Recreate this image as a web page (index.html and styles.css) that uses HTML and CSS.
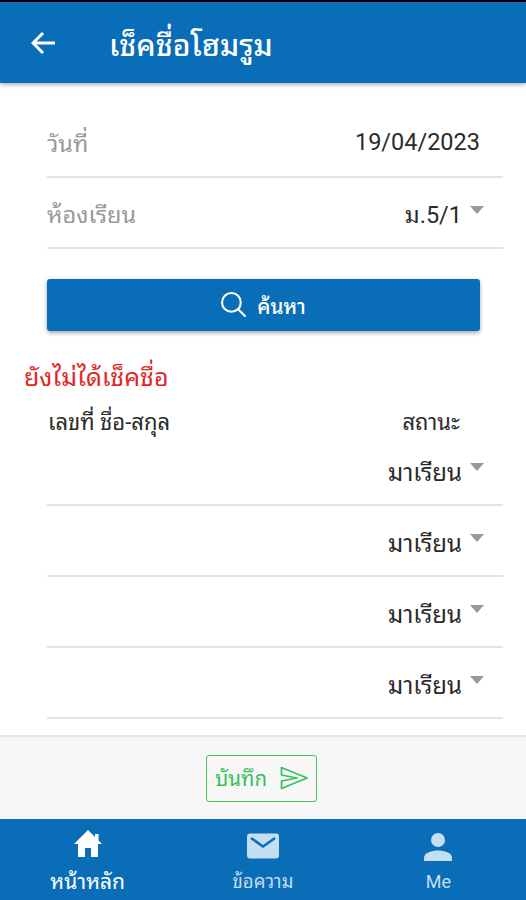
FILE: index.html
```html
<!DOCTYPE html>
<html lang="th">
<head>
  <meta charset="UTF-8">
  <title>เช็คชื่อโฮมรูม</title>
  <link rel="stylesheet" href="styles.css">
</head>
<body>
  <header class="toolbar">
    <svg class="back" viewBox="0 0 24 22" fill="none" stroke="currentColor" stroke-width="3">
      <path d="M12 1 2 11l10 10M2 11h22"/>
    </svg>
    <h1>เช็คชื่อโฮมรูม</h1>
  </header>

  <main>
    <div class="item date">
      <span class="label">วันที่</span>
      <span class="value">19/04/2023</span>
    </div>
    <div class="item room">
      <span class="label">ห้องเรียน</span>
      <span class="value">ม.5/1</span>
      <i class="caret"></i>
    </div>

    <button class="search">
      <svg viewBox="0 0 24 24" fill="none" stroke="currentColor" stroke-width="2" stroke-linecap="round">
        <circle cx="10" cy="10" r="9"/>
        <path d="m16.5 16.5 6.5 6.5"/>
      </svg>
      <span>ค้นหา</span>
    </button>

    <p class="warning">ยังไม่ได้เช็คชื่อ</p>

    <div class="list-head">
      <span>เลขที่ ชื่อ-สกุล</span>
      <span>สถานะ</span>
    </div>
    <div class="item student"><span class="value">มาเรียน</span><i class="caret"></i></div>
    <div class="item student"><span class="value">มาเรียน</span><i class="caret"></i></div>
    <div class="item student"><span class="value">มาเรียน</span><i class="caret"></i></div>
    <div class="item student"><span class="value">มาเรียน</span><i class="caret"></i></div>
  </main>

  <div class="footer">
    <button class="save">
      <span>บันทึก</span>
      <svg viewBox="0 0 28 24" fill="none" stroke="currentColor" stroke-width="1.7" stroke-linejoin="round">
        <path d="M1.500 1.500 27 12 1.500 22.500V15L17 12 1.500 9z"/>
      </svg>
    </button>
  </div>

  <nav class="tabs">
    <a class="tab home active">
      <svg viewBox="0 0 28 28" fill="currentColor">
        <path d="M14 0 0 14h4v13h7v-9h6v9h7V14h4l-3.500-3.500V4h-3.500v3z"/>
      </svg>
      <span>หน้าหลัก</span>
    </a>
    <a class="tab mail">
      <svg viewBox="0 0 32 26">
        <rect width="32" height="25" y=".5" rx="3" fill="currentColor"/>
        <path class="flap" d="m4 5 12 8.500L28 5"/>
      </svg>
      <span>ข้อความ</span>
    </a>
    <a class="tab me">
      <svg viewBox="0 0 28 28" fill="currentColor">
        <circle cx="14" cy="7" r="7"/>
        <path d="M0 28v-3.500c0-4.500 8-7 14-7s14 2.500 14 7V28z"/>
      </svg>
      <span>Me</span>
    </a>
  </nav>
</body>
</html>
```
FILE: styles.css
```css
* {
  box-sizing: border-box;
}

body {
  margin: 0;
  height: 900px;
  display: flex;
  flex-direction: column;
  border-top: 2px solid #000;
  background: #fff;
  color: #2b2b2b;
  font-family: Roboto, "Noto Sans Thai Looped", "Noto Sans Thai", "Noto Sans", sans-serif;
  overflow: hidden;
}

.toolbar {
  height: 81px;
  flex: none;
  display: flex;
  align-items: center;
  padding: 0 31px;
  background: #0a6db7;
  color: #fff;
  box-shadow: 0 1px 5px rgba(0, 0, 0, 0.4);
}

.back {
  width: 24px;
  height: 22px;
}

h1 {
  margin: 0 0 0 54px;
  font-size: 30px;
  font-weight: 500;
}

main {
  flex: 1;
  padding-top: 24px;
}

.item {
  height: 71px;
  margin: 0 23px 0 47px;
  display: flex;
  align-items: center;
  border-bottom: 2px solid #e4e4e4;
  font-size: 24px;
}

.label {
  color: #999;
  font-size: 23.5px;
}

.value {
  margin-left: auto;
}

.date {
  padding-right: 23px;
  font-size: 23.5px;
}

.room,
.student {
  padding-right: 19px;
}

.room {
  font-size: 23.5px;
}

.caret {
  margin: -5px 0 0 8px;
  border: 7px solid transparent;
  border-top: 8px solid #999;
  border-bottom: 0;
}

.search {
  width: 433px;
  height: 52px;
  margin: 30px 0 0 47px;
  display: flex;
  align-items: center;
  justify-content: center;
  gap: 11px;
  padding-bottom: 3px;
  border: 0;
  border-radius: 3px;
  background: #0a6db7;
  color: #fff;
  font: 500 20.5px Roboto, "Noto Sans Thai Looped", "Noto Sans Thai", sans-serif;
  box-shadow: 0 2px 4px rgba(0, 0, 0, 0.35);
}

.search svg {
  width: 25px;
  height: 25px;
}

.warning {
  height: 32px;
  margin: 31px 0 0 24px;
  line-height: 32px;
  color: #e32626;
  font-size: 25px;
}

.list-head {
  height: 41px;
  padding: 0 66px 0 48px;
  display: flex;
  justify-content: space-between;
  line-height: 57px;
  font-size: 22px;
}

.footer {
  height: 84px;
  flex: none;
  display: flex;
  align-items: center;
  justify-content: center;
  border-top: 2px solid #e6e6e6;
  background: #f7f7f7;
}

.save {
  width: 111px;
  height: 47px;
  margin-left: -3px;
  display: flex;
  align-items: center;
  justify-content: space-between;
  padding: 0 8px;
  border: 1.5px solid #42c466;
  border-radius: 3px;
  background: transparent;
  color: #36be5c;
  font: 20.5px Roboto, "Noto Sans Thai Looped", "Noto Sans Thai", sans-serif;
}

.save span {
  margin-top: -3px;
}

.save svg {
  width: 28px;
  height: 24px;
}

.tabs {
  height: 81px;
  flex: none;
  display: flex;
  background: #0a6db7;
}

.tab {
  flex: 1;
  display: flex;
  flex-direction: column;
  align-items: center;
  justify-content: space-between;
  padding: 14px 0 7px;
  color: #c3ddf1;
  font-size: 18px;
  line-height: 22px;
}

.home {
  padding-top: 11px;
  font-size: 21px;
}

.tab.active {
  color: #fff;
}

.tab svg {
  width: 28px;
  height: 28px;
}

.mail {
  font-size: 18.5px;
}

.tab.mail svg {
  width: 32px;
  height: 26px;
}

.flap {
  fill: none;
  stroke: #0a6db7;
  stroke-width: 2.5;
}
```
